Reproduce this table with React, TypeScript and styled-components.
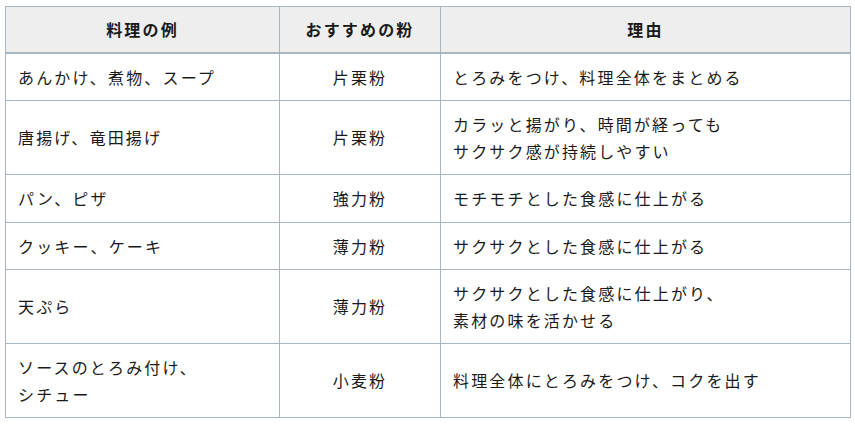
import React from "react";
import styled, { createGlobalStyle } from "styled-components";

interface Row {
  dish: string[];
  flour: string;
  reason: string[];
}

const rows: Row[] = [
  { dish: ["あんかけ、煮物、スープ"], flour: "片栗粉", reason: ["とろみをつけ、料理全体をまとめる"] },
  {
    dish: ["唐揚げ、竜田揚げ"],
    flour: "片栗粉",
    reason: ["カラッと揚がり、時間が経っても", "サクサク感が持続しやすい"],
  },
  { dish: ["パン、ピザ"], flour: "強力粉", reason: ["モチモチとした食感に仕上がる"] },
  { dish: ["クッキー、ケーキ"], flour: "薄力粉", reason: ["サクサクとした食感に仕上がる"] },
  {
    dish: ["天ぷら"],
    flour: "薄力粉",
    reason: ["サクサクとした食感に仕上がり、", "素材の味を活かせる"],
  },
  {
    dish: ["ソースのとろみ付け、", "シチュー"],
    flour: "小麦粉",
    reason: ["料理全体にとろみをつけ、コクを出す"],
  },
];

const GlobalStyle = createGlobalStyle`
  body {
    margin: 0;
    background: #ffffff;
    font-family: "Noto Sans CJK JP", "Noto Sans", sans-serif;
    color: #1a1a1a;
  }
`;

const Wrapper = styled.div`
  padding: 6px 4px 0 5px;
`;

const Table = styled.table`
  width: 846px;
  border-collapse: collapse;
  table-layout: fixed;
  font-size: 16px;
  letter-spacing: 0.135em;
  line-height: 26.5px;
`;

const Col = styled.col<{ $width?: number }>`
  width: ${(p) => (p.$width ? `${p.$width}px` : "auto")};
`;

const HeadCell = styled.th`
  box-sizing: border-box;
  background: #eeeeee;
  border: 1px solid #a9b5c1;
  border-bottom: 2px solid #a9b5c1;
  padding: 9px 12px;
  font-weight: 700;
  text-align: center;
`;

const Cell = styled.td<{ $center?: boolean }>`
  box-sizing: border-box;
  border: 1px solid #a9b5c1;
  padding: 10px 12px;
  text-align: ${(p) => (p.$center ? "center" : "left")};
  vertical-align: middle;
`;

const Line = styled.div``;

export default function App() {
  return (
    <>
      <GlobalStyle />
      <Wrapper>
        <Table>
          <colgroup>
            <Col $width={274} />
            <Col $width={161} />
            <Col />
          </colgroup>
          <thead>
            <tr>
              <HeadCell>料理の例</HeadCell>
              <HeadCell>おすすめの粉</HeadCell>
              <HeadCell>理由</HeadCell>
            </tr>
          </thead>
          <tbody>
            {rows.map((r, i) => (
              <tr key={i}>
                <Cell>
                  {r.dish.map((l) => (
                    <Line key={l}>{l}</Line>
                  ))}
                </Cell>
                <Cell $center>{r.flour}</Cell>
                <Cell>
                  {r.reason.map((l) => (
                    <Line key={l}>{l}</Line>
                  ))}
                </Cell>
              </tr>
            ))}
          </tbody>
        </Table>
      </Wrapper>
    </>
  );
}
